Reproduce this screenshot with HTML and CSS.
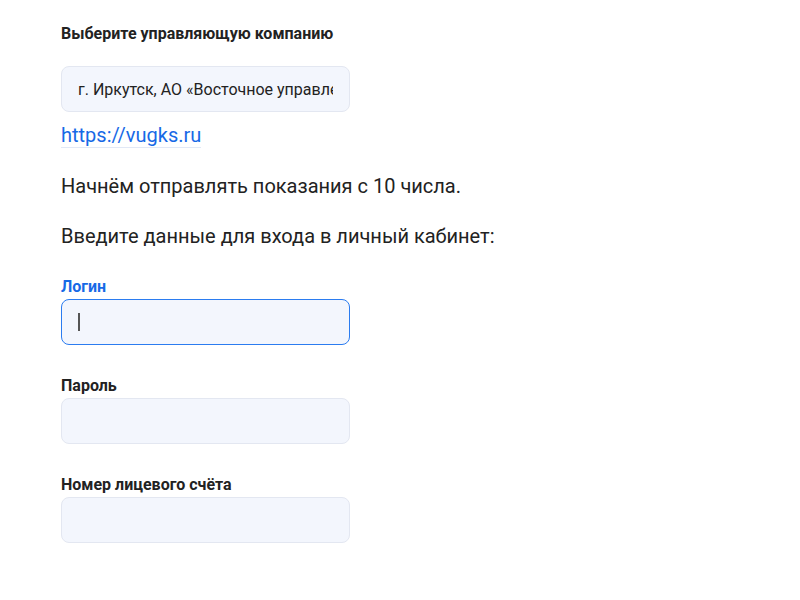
FILE: index.html
```html
<!DOCTYPE html>
<html>
<head>
    <title>Передача показаний</title>
    <meta charset="UTF-8">
    <link rel="stylesheet" href="styles.css">
</head>
<body>
    <div class="page">
        <div class="field-label">Выберите управляющую компанию</div>
        <div class="field select">
            <span class="field-value">г. Иркутск, АО «Восточное управление жилищно-коммунальными системами»</span>
        </div>
        <a class="site-link" href="#">https://vugks.ru</a>
        <p class="text">Начнём отправлять показания с 10 числа.</p>
        <p class="text">Введите данные для входа в личный кабинет:</p>

        <div class="group">
            <div class="field-label active">Логин</div>
            <div class="field focused"><span class="caret"></span></div>
        </div>
        <div class="group">
            <div class="field-label">Пароль</div>
            <div class="field"></div>
        </div>
        <div class="group">
            <div class="field-label">Номер лицевого счёта</div>
            <div class="field"></div>
        </div>
    </div>
</body>
</html>
```

FILE: styles.css
```css
body {
    margin: 0;
    background-color: #fff;
    font-family: Roboto, "Noto Sans", sans-serif;
    color: #222;
}

.page {
    padding: 24px 61px;
}

/* Подписи полей */
.field-label {
    font-size: 16px;
    line-height: 20px;
    font-weight: 700;
    color: #222;
}

.field-label.active {
    color: #1769e6;
}

/* Поля ввода */
.field {
    box-sizing: border-box;
    width: 289px;
    height: 46px;
    padding: 0 16px;
    border: 1px solid #e3e7f1;
    border-radius: 8px;
    background-color: #f3f6fd;
    display: flex;
    align-items: center;
    margin-top: 2px;
}

.field.select {
    margin-top: 22px;
}

.field.focused {
    border: 1.5px solid #2b7cf0;
}

.field-value {
    flex: 1;
    min-width: 0;
    overflow: hidden;
    text-overflow: clip;
    font-size: 16px;
    white-space: nowrap;
    color: #222;
}

.caret {
    width: 2px;
    height: 18px;
    background-color: #555;
}

.site-link {
    display: inline-block;
    margin-top: 12px;
    font-size: 20px;
    line-height: 23px;
    color: #1769e6;
    text-decoration: none;
    border-bottom: 1px solid #e1e8f6;
}

.text {
    margin: 26px 0 0;
    font-size: 20px;
    line-height: 24px;
}

.group {
    margin-top: 31px;
}

.text + .group {
    margin-top: 29px;
}
```
